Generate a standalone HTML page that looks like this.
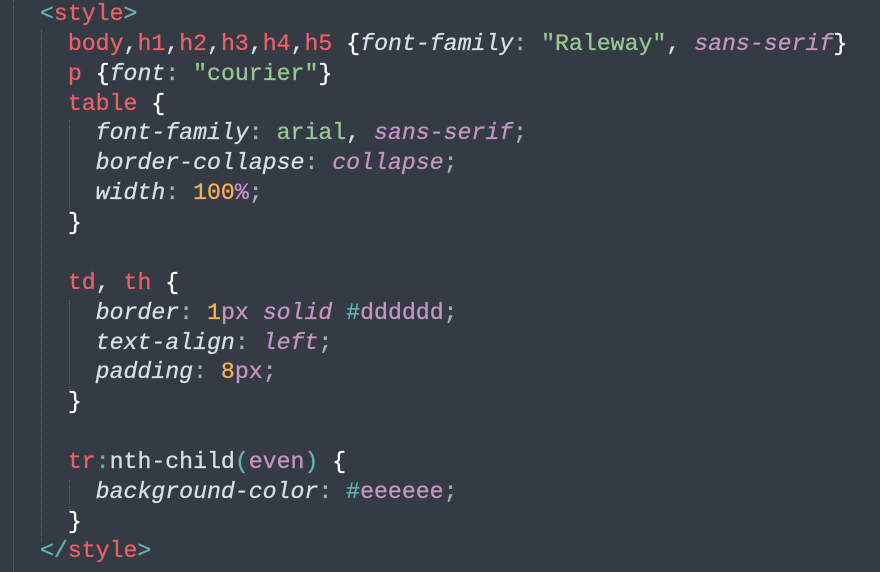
<!DOCTYPE html>
<html><head><meta charset="utf-8"><style>
html,body{margin:0;padding:0;}
body{width:880px;height:572px;background:#343b45;position:relative;overflow:hidden;font-family:"Liberation Mono",monospace;font-size:23.2px;color:#d8dee9;}
.l{position:absolute;left:40px;height:30px;line-height:30px;white-space:pre;-webkit-text-stroke:0.3px currentColor;}
.g{position:absolute;width:0;border-left:1px dotted #5a616c;}
.r{color:#ec5f67}.t{color:#5fb3b3}.s{color:#99c794}.p{color:#c594c5}.o{color:#f9ae58}.w{color:#ffffff}.c{color:#a6acb9}
i{font-style:italic;}
.pi{color:#c594c5;font-style:italic}
</style></head><body>
<div class="g" style="left:13px;top:0;height:572px"></div>
<div class="g" style="left:41px;top:30px;height:512px"></div>
<div class="g" style="left:69px;top:120px;height:90px"></div>
<div class="g" style="left:69px;top:300px;height:90px"></div>
<div class="g" style="left:69px;top:480px;height:30px"></div>
<div class="l" style="top:-1px"><span class="t">&lt;</span><span class="r">style</span><span class="t">&gt;</span></div>
<div class="l" style="top:29px">  <span class="r">body</span>,<span class="r">h1</span>,<span class="r">h2</span>,<span class="r">h3</span>,<span class="r">h4</span>,<span class="r">h5</span> <span class="w">{</span><i>font-family</i><span class="c">:</span> <span class="s">"Raleway"</span>, <span class="pi">sans-serif</span><span class="w">}</span></div>
<div class="l" style="top:59px">  <span class="r">p</span> <span class="w">{</span><i>font</i><span class="c">:</span> <span class="s">"courier"</span><span class="w">}</span></div>
<div class="l" style="top:89px">  <span class="r">table</span> <span class="w">{</span></div>
<div class="l" style="top:118px">    <i>font-family</i><span class="c">:</span> <span class="s">arial</span>, <span class="pi">sans-serif</span><span class="c">;</span></div>
<div class="l" style="top:148px">    <i>border-collapse</i><span class="c">:</span> <span class="pi">collapse</span><span class="c">;</span></div>
<div class="l" style="top:178px">    <i>width</i><span class="c">:</span> <span class="o">100</span><span class="p">%</span><span class="c">;</span></div>
<div class="l" style="top:208px">  <span class="w">}</span></div>
<div class="l" style="top:268px">  <span class="r">td</span>, <span class="r">th</span> <span class="w">{</span></div>
<div class="l" style="top:298px">    <i>border</i><span class="c">:</span> <span class="o">1</span><span class="p">px</span> <span class="pi">solid</span> <span class="t">#</span><span class="p">dddddd</span><span class="c">;</span></div>
<div class="l" style="top:328px">    <i>text-align</i><span class="c">:</span> <span class="pi">left</span><span class="c">;</span></div>
<div class="l" style="top:357px">    <i>padding</i><span class="c">:</span> <span class="o">8</span><span class="p">px</span><span class="c">;</span></div>
<div class="l" style="top:387px">  <span class="w">}</span></div>
<div class="l" style="top:447px">  <span class="r">tr</span><span class="t">:</span>nth-child<span class="t">(</span><span class="p">even</span><span class="t">)</span> <span class="w">{</span></div>
<div class="l" style="top:477px">    <i>background-color</i><span class="c">:</span> <span class="t">#</span><span class="p">eeeeee</span><span class="c">;</span></div>
<div class="l" style="top:507px">  <span class="w">}</span></div>
<div class="l" style="top:536px"><span class="t">&lt;/</span><span class="r">style</span><span class="t">&gt;</span></div>
</body></html>
